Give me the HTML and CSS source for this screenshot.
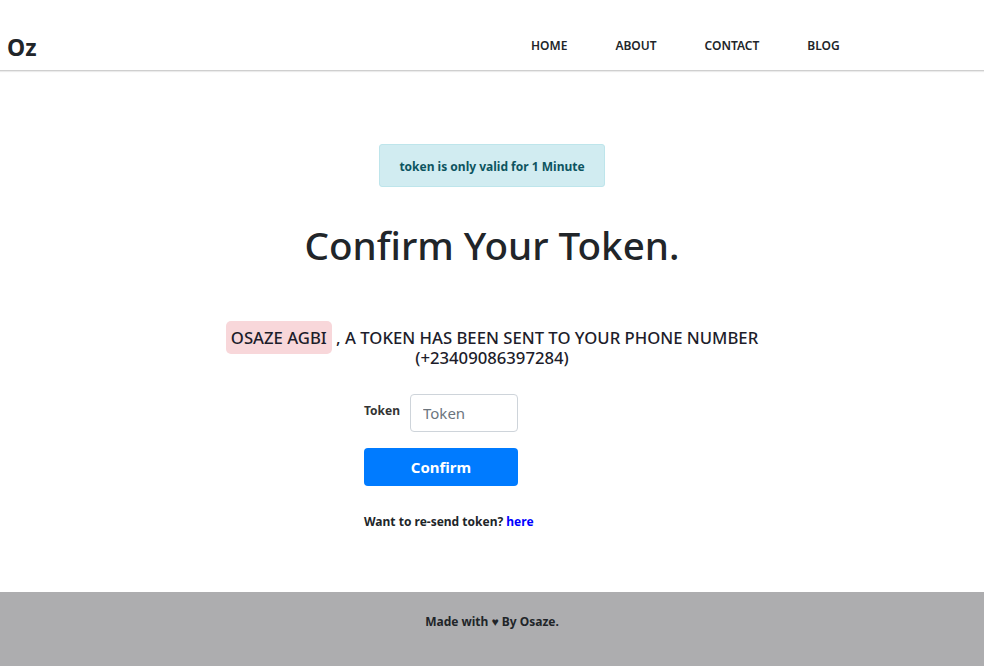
FILE: index.html
```html
<!DOCTYPE html>
<html lang="en">
<head>
<meta charset="utf-8">
<title>Confirm Token</title>
<link rel="stylesheet" href="styles.css">
</head>
<body>
<header class="navbar">
  <a class="brand" href="#">Oz</a>
  <nav class="nav">
    <a href="#">HOME</a>
    <a href="#">ABOUT</a>
    <a href="#">CONTACT</a>
    <a href="#">BLOG</a>
  </nav>
</header>
<main class="main">
  <div class="alert">token is only valid for 1 Minute</div>
  <h1 class="title">Confirm Your Token.</h1>
  <p class="message"><span class="badge">OSAZE AGBI</span> , A TOKEN HAS BEEN SENT TO YOUR PHONE NUMBER (+23409086397284)</p>
  <form class="form">
    <div class="row">
      <label class="label" for="tok">Token</label>
      <input class="input" id="tok" type="text" placeholder="Token">
    </div>
    <button class="btn" type="button">Confirm</button>
    <p class="resend">Want to re-send token? <a href="#">here</a></p>
  </form>
</main>
<footer class="footer">Made with &#9829; By Osaze.</footer>
</body>
</html>
```
FILE: styles.css
```css
* { box-sizing: border-box; }
html, body { margin: 0; padding: 0; }
body {
  font-family: "Noto Sans", "Open Sans", sans-serif;
  color: #212529;
  background: #fff;
  width: 984px;
  height: 666px;
  display: flex;
  flex-direction: column;
}
.navbar {
  height: 71px;
  border-bottom: 1px solid #cfcfcf;
  box-shadow: 0 1px 1px rgba(0,0,0,0.08);
  display: flex;
  align-items: flex-end;
  padding: 0 0 12px 7px;
}
.brand {
  font-size: 23px;
  font-weight: 700;
  color: #212529;
  text-decoration: none;
  line-height: 26px;
  width: 30px;
  margin-bottom: -2px;
}
.nav {
  margin-left: 494px;
  display: flex;
  padding-bottom: 4px;
}
.nav a {
  font-size: 12px;
  font-weight: 600;
  color: #212529;
  text-decoration: none;
  margin-right: 48px;
  line-height: 16px;
}
.main {
  flex: 1;
  display: flex;
  flex-direction: column;
  align-items: center;
  padding-top: 73px;
}
.alert {
  width: 226px;
  height: 43px;
  background: #d1ecf1;
  border: 1px solid #bee5eb;
  border-radius: 3px;
  color: #0c5460;
  font-size: 12px;
  font-weight: 700;
  display: flex;
  align-items: center;
  justify-content: center;
  padding-top: 2px;
}
.title {
  margin: 34px 0 0;
  font-size: 38.6px;
  font-weight: 500;
  line-height: 48px;
}
.message {
  margin: 59px 0 0;
  width: 560px;
  text-align: center;
  font-size: 16.7px;
  font-weight: 500;
  line-height: 20px;
  color: #1d1d2b;
}
.badge {
  background: #f8d7da;
  border-radius: 5px;
  padding: 5px 5px;
}
.form {
  margin-top: 26px;
  width: 154px;
  margin-right: 102px;
}
.row {
  display: flex;
  align-items: flex-start;
}
.label {
  font-size: 12px;
  font-weight: 700;
  color: #333;
  width: 46px;
  padding-top: 8px;
}
.input {
  width: 108px;
  height: 38px;
  border: 1px solid #ced4da;
  border-radius: 4px;
  padding: 0 12px;
  font-family: inherit;
  font-size: 15px;
  color: #495057;
}
.input::placeholder { color: #6c757d; }
.btn {
  margin-top: 16px;
  width: 154px;
  height: 38px;
  background: #007bff;
  border: none;
  border-radius: 4px;
  color: #fff;
  font-family: inherit;
  font-size: 15px;
  font-weight: 700;
}
.resend {
  margin: 27px 0 0;
  font-size: 12px;
  font-weight: 700;
  white-space: nowrap;
}
.resend a { color: #0000ff; text-decoration: none; }
.footer {
  height: 74px;
  background: #adadaf;
  display: flex;
  align-items: flex-start;
  justify-content: center;
  padding-top: 21px;
  font-size: 12px;
  font-weight: 700;
  color: #212529;
}
```
